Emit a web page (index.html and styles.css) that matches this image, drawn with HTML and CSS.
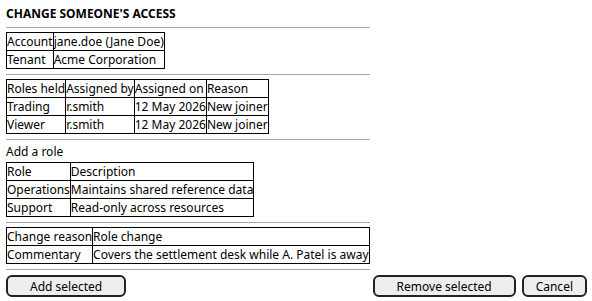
FILE: index.html
```html
<!DOCTYPE html>
<html lang="en">
<head>
  <meta charset="UTF-8">
  <title>Change someone's access</title>
  <link rel="stylesheet" href="styles.css">
</head>
<body>
  <div class="page">
    <h1 class="title">CHANGE SOMEONE'S ACCESS</h1>
    <div class="rule"></div>

    <!-- account -->
    <table class="grid">
      <tr><td>Account</td><td>jane.doe (Jane Doe)</td></tr>
      <tr><td>Tenant</td><td>Acme Corporation</td></tr>
    </table>
    <div class="rule"></div>

    <!-- roles held -->
    <table class="grid">
      <tr><td>Roles held</td><td>Assigned by</td><td>Assigned on</td><td>Reason</td></tr>
      <tr><td>Trading</td><td>r.smith</td><td>12 May 2026</td><td>New joiner</td></tr>
      <tr><td>Viewer</td><td>r.smith</td><td>12 May 2026</td><td>New joiner</td></tr>
    </table>
    <div class="rule"></div>

    <!-- add a role -->
    <div class="label">Add a role</div>
    <table class="grid">
      <tr><td>Role</td><td>Description</td></tr>
      <tr><td>Operations</td><td>Maintains shared reference data</td></tr>
      <tr><td>Support</td><td>Read-only across resources</td></tr>
    </table>
    <div class="rule"></div>

    <!-- reason -->
    <table class="grid">
      <tr><td>Change reason</td><td>Role change</td></tr>
      <tr><td>Commentary</td><td>Covers the settlement desk while A. Patel is away</td></tr>
    </table>
    <div class="rule"></div>

    <div class="actions">
      <button class="btn">Add selected</button>
      <div class="actions-right">
        <button class="btn">Remove selected</button>
        <button class="btn btn-small">Cancel</button>
      </div>
    </div>
  </div>
</body>
</html>
```

FILE: styles.css
```css
/* base */
body {
  margin: 0;
  font-family: "Noto Sans", "Open Sans", sans-serif;
  font-size: 12px;
  color: #000;
  background: #fff;
}
.page {
  padding: 6px 5px 0 6px;
}
.title {
  font-size: 12px;
  font-weight: bold;
  margin: 0 0 5px 0;
  line-height: 16px;
}
.rule {
  width: 364px;
  height: 1px;
  background-color: #a6a6a6;
  margin: 0 0 4px 0;
}
.label {
  line-height: 16px;
  margin-bottom: 2px;
}

/* tables */
.grid {
  border-collapse: collapse;
  margin-bottom: 5px;
}
.grid td {
  border: 1px solid #000;
  padding: 0;
  line-height: 17px;
  white-space: nowrap;
}

/* buttons */
.actions {
  display: flex;
  justify-content: space-between;
  margin-top: 5px;
}
.actions-right {
  display: flex;
  gap: 6px;
}
.btn {
  font-family: inherit;
  font-size: 12px;
  height: 22px;
  padding: 0 22px;
  background-color: #eeeeee;
  border: 2px solid #222;
  border-radius: 6px;
  color: #000;
}
.btn-small {
  padding: 0 12px;
}
```
